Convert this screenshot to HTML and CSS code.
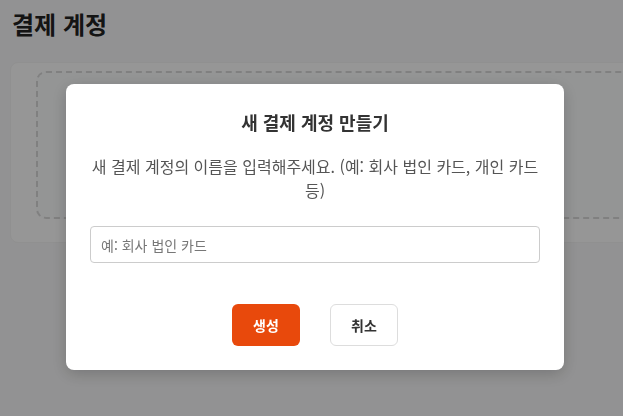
FILE: index.html
```html
<!DOCTYPE html>
<html lang="ko">
<head>
<meta charset="utf-8">
<link rel="stylesheet" href="styles.css">
</head>
<body>
<div class="page">
  <h1 class="page-title">결제 계정</h1>
  <div class="card">
    <div class="dropzone"></div>
  </div>
</div>
<div class="overlay">
  <div class="modal">
    <h3 class="modal-title">새 결제 계정 만들기</h3>
    <p class="modal-desc">새 결제 계정의 이름을 입력해주세요. (예: 회사 법인 카드, 개인 카드 등)</p>
    <input class="modal-input" type="text" placeholder="예: 회사 법인 카드">
    <div class="modal-actions">
      <button class="btn btn-primary">생성</button>
      <button class="btn btn-secondary">취소</button>
    </div>
  </div>
</div>
</body>
</html>
```

FILE: styles.css
```css
html, body {
  margin: 0;
  padding: 0;
  width: 623px;
  height: 416px;
  overflow: hidden;
  background: #f4f4f5;
  font-family: "Noto Sans CJK KR", "Noto Sans", sans-serif;
}
.page {
  padding: 6px 0 0 10px;
}
.page-title {
  margin: 0 0 0 2px;
  font-size: 24px;
  line-height: 36px;
  font-weight: 700;
  color: #222;
}
.card {
  margin-top: 20px;
  width: 640px;
  height: 181px;
  background: #fbfbfb;
  border: 1px solid #f0f0f0;
  border-radius: 8px;
  padding: 8px 0 0 25px;
  box-sizing: border-box;
}
.dropzone {
  height: 148px;
  border: 2px dashed #d6d6d6;
  border-radius: 10px;
  background: #f7f8f9;
  box-sizing: border-box;
}
.overlay {
  position: fixed;
  inset: 0;
  background: rgba(0, 0, 0, 0.4);
  display: flex;
  justify-content: center;
  align-items: flex-start;
}
.modal {
  margin-top: 84px;
  margin-left: 7px;
  width: 498px;
  box-sizing: border-box;
  background: #fff;
  border-radius: 8px;
  box-shadow: 0 4px 16px rgba(0,0,0,0.2);
  padding: 25px 24px 24px;
  display: flex;
  flex-direction: column;
  align-items: stretch;
}
.modal-title {
  margin: 0;
  text-align: center;
  font-size: 18px;
  line-height: 27px;
  font-weight: 700;
  color: #333;
}
.modal-desc {
  margin: 18px 0 0;
  text-align: center;
  font-size: 16px;
  line-height: 24px;
  color: #555;
}
.modal-input {
  margin-top: 24px;
  height: 37px;
  box-sizing: border-box;
  border: 1px solid #ccc;
  border-radius: 4px;
  padding: 0 10px;
  font-family: inherit;
  font-size: 14px;
  color: #333;
  outline: none;
}
.modal-input::placeholder {
  color: #777;
}
.modal-actions {
  margin-top: 41px;
  display: flex;
  justify-content: center;
  gap: 30px;
}
.btn {
  width: 68px;
  height: 42px;
  box-sizing: border-box;
  border-radius: 6px;
  font-family: inherit;
  font-size: 14px;
  font-weight: 700;
  cursor: pointer;
}
.btn-primary {
  background: #e8490c;
  border: none;
  color: #fff;
}
.btn-secondary {
  background: #fff;
  border: 1px solid #ddd;
  color: #333;
}
```
